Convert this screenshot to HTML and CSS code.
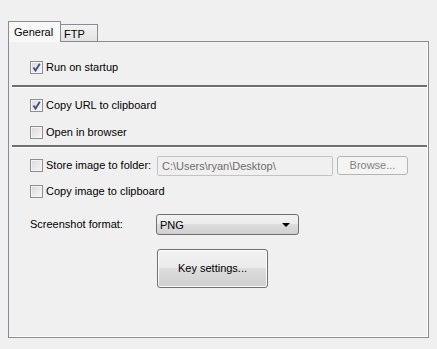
FILE: index.html
```html
<!DOCTYPE html>
<html>
<head>
<meta charset="utf-8">
<link rel="stylesheet" href="styles.css">
</head>
<body>
<div class="dialog">
  <div class="tabs">
    <div class="tab active">General</div>
    <div class="tab">FTP</div>
  </div>
  <div class="panel">
    <div class="row first">
      <span class="cb checked"><svg viewBox="0 0 11 11" width="11" height="11"><path d="M2.5 5.5 L4.5 8.5 L8.8 1.8" fill="none" stroke="#3c4f8c" stroke-width="1.8"/></svg></span>
      <span class="lbl">Run on startup</span>
    </div>
    <div class="sep"></div>
    <div class="row sec">
      <span class="cb checked"><svg viewBox="0 0 11 11" width="11" height="11"><path d="M2.5 5.5 L4.5 8.5 L8.8 1.8" fill="none" stroke="#3c4f8c" stroke-width="1.8"/></svg></span>
      <span class="lbl">Copy URL to clipboard</span>
    </div>
    <div class="row next">
      <span class="cb"></span>
      <span class="lbl">Open in browser</span>
    </div>
    <div class="sep sep2"></div>
    <div class="row folder">
      <span class="cb"></span>
      <span class="lbl wide">Store image to folder:</span>
      <div class="input">C:\Users\ryan\Desktop\</div>
      <div class="btn-disabled">Browse...</div>
    </div>
    <div class="row next2">
      <span class="cb"></span>
      <span class="lbl">Copy image to clipboard</span>
    </div>
    <div class="row format">
      <span class="flabel">Screenshot format:</span>
      <div class="select">PNG<span class="arrow"></span></div>
    </div>
    <div class="keyrow">
      <div class="button">Key settings...</div>
    </div>
  </div>
</div>
</body>
</html>
```

FILE: styles.css
```css
html, body {
  margin: 0;
  padding: 0;
  background: #f0f0f0;
  font-family: "Liberation Sans", Arial, sans-serif;
  font-size: 11px;
  color: #000;
}
.dialog {
  padding: 21px 0 0 8px;
  width: 421px;
}
.tabs {
  display: flex;
  align-items: flex-end;
  height: 20px;
  position: relative;
  z-index: 2;
}
.tab {
  box-sizing: border-box;
  height: 17px;
  border: 1px solid #898c95;
  border-bottom: none;
  padding: 3px 0 0 3px;
  width: 38px;
  background: linear-gradient(#f3f3f3, #e3e3e3);
  line-height: 13px;
  margin-left: -1px;
}
.tab.active {
  height: 21px;
  width: 53px;
  margin-left: 0;
  margin-bottom: -1px;
  background: #f9f9f9;
  padding: 4px 0 0 5px;
  z-index: 3;
  position: relative;
}
.panel {
  box-sizing: border-box;
  height: 297px;
  border: 1px solid #898c95;
  background: #f0f0f0;
  box-shadow: inset -1px -1px 0 #ffffff;
  padding: 19px 1px 0 3px;
}
.row {
  display: flex;
  align-items: center;
  height: 13px;
  padding-left: 18px;
}
.cb {
  box-sizing: border-box;
  width: 13px;
  height: 13px;
  border: 1px solid #8e8f8f;
  background: linear-gradient(135deg, #d9d9d9, #f7f7f7);
  box-shadow: inset 0 0 0 1px #f4f4f4;
  display: flex;
  align-items: center;
  justify-content: center;
  flex: none;
}
.cb svg { display: block; }
.lbl {
  margin-left: 3px;
  line-height: 13px;
  white-space: nowrap;
}
.lbl.wide {
  width: 111px;
}
.sep {
  height: 2px;
  background: #6f6f6f;
  margin-top: 11px;
  border-bottom: 1px solid #fbfbfb;
}
.sep2 {
  margin-top: 6px;
}
.sec { margin-top: 11px; }
.next { margin-top: 14px; }
.folder { margin-top: 11px; }
.input {
  box-sizing: border-box;
  width: 176px;
  height: 20px;
  border: 1px solid #c3c3c3;
  border-radius: 2px;
  background: #f0f0f0;
  color: #6d6d6d;
  padding: 2px 0 0 4px;
  line-height: 14px;
  flex: none;
}
.btn-disabled {
  box-sizing: border-box;
  width: 71px;
  height: 19px;
  border: 1px solid #b5b5b5;
  border-radius: 3px;
  background: #f4f4f4;
  color: #838383;
  text-align: center;
  line-height: 17px;
  margin-left: 4px;
  flex: none;
}
.next2 { margin-top: 13px; }
.format {
  margin-top: 16px;
  height: 21px;
}
.flabel {
  width: 126px;
  flex: none;
  line-height: 13px;
  padding-bottom: 1px;
}
.select {
  box-sizing: border-box;
  width: 143px;
  height: 21px;
  border: 1px solid #707070;
  border-radius: 3px;
  background: linear-gradient(#f2f2f2 0%, #ebebeb 50%, #dddddd 50%, #cfcfcf 100%);
  padding: 3px 0 0 3px;
  line-height: 14px;
  position: relative;
}
.arrow {
  position: absolute;
  right: 8px;
  top: 8px;
  width: 0;
  height: 0;
  border-left: 4px solid transparent;
  border-right: 4px solid transparent;
  border-top: 4px solid #000;
}
.keyrow {
  padding-left: 145px;
  margin-top: 14px;
}
.button {
  box-sizing: border-box;
  width: 111px;
  height: 39px;
  border: 1px solid #707070;
  border-radius: 3px;
  background: linear-gradient(#f2f2f2 0%, #ebebeb 50%, #dddddd 50%, #cfcfcf 100%);
  box-shadow: inset 0 0 0 1px #fcfcfc;
  text-align: center;
  line-height: 36px;
}
```
